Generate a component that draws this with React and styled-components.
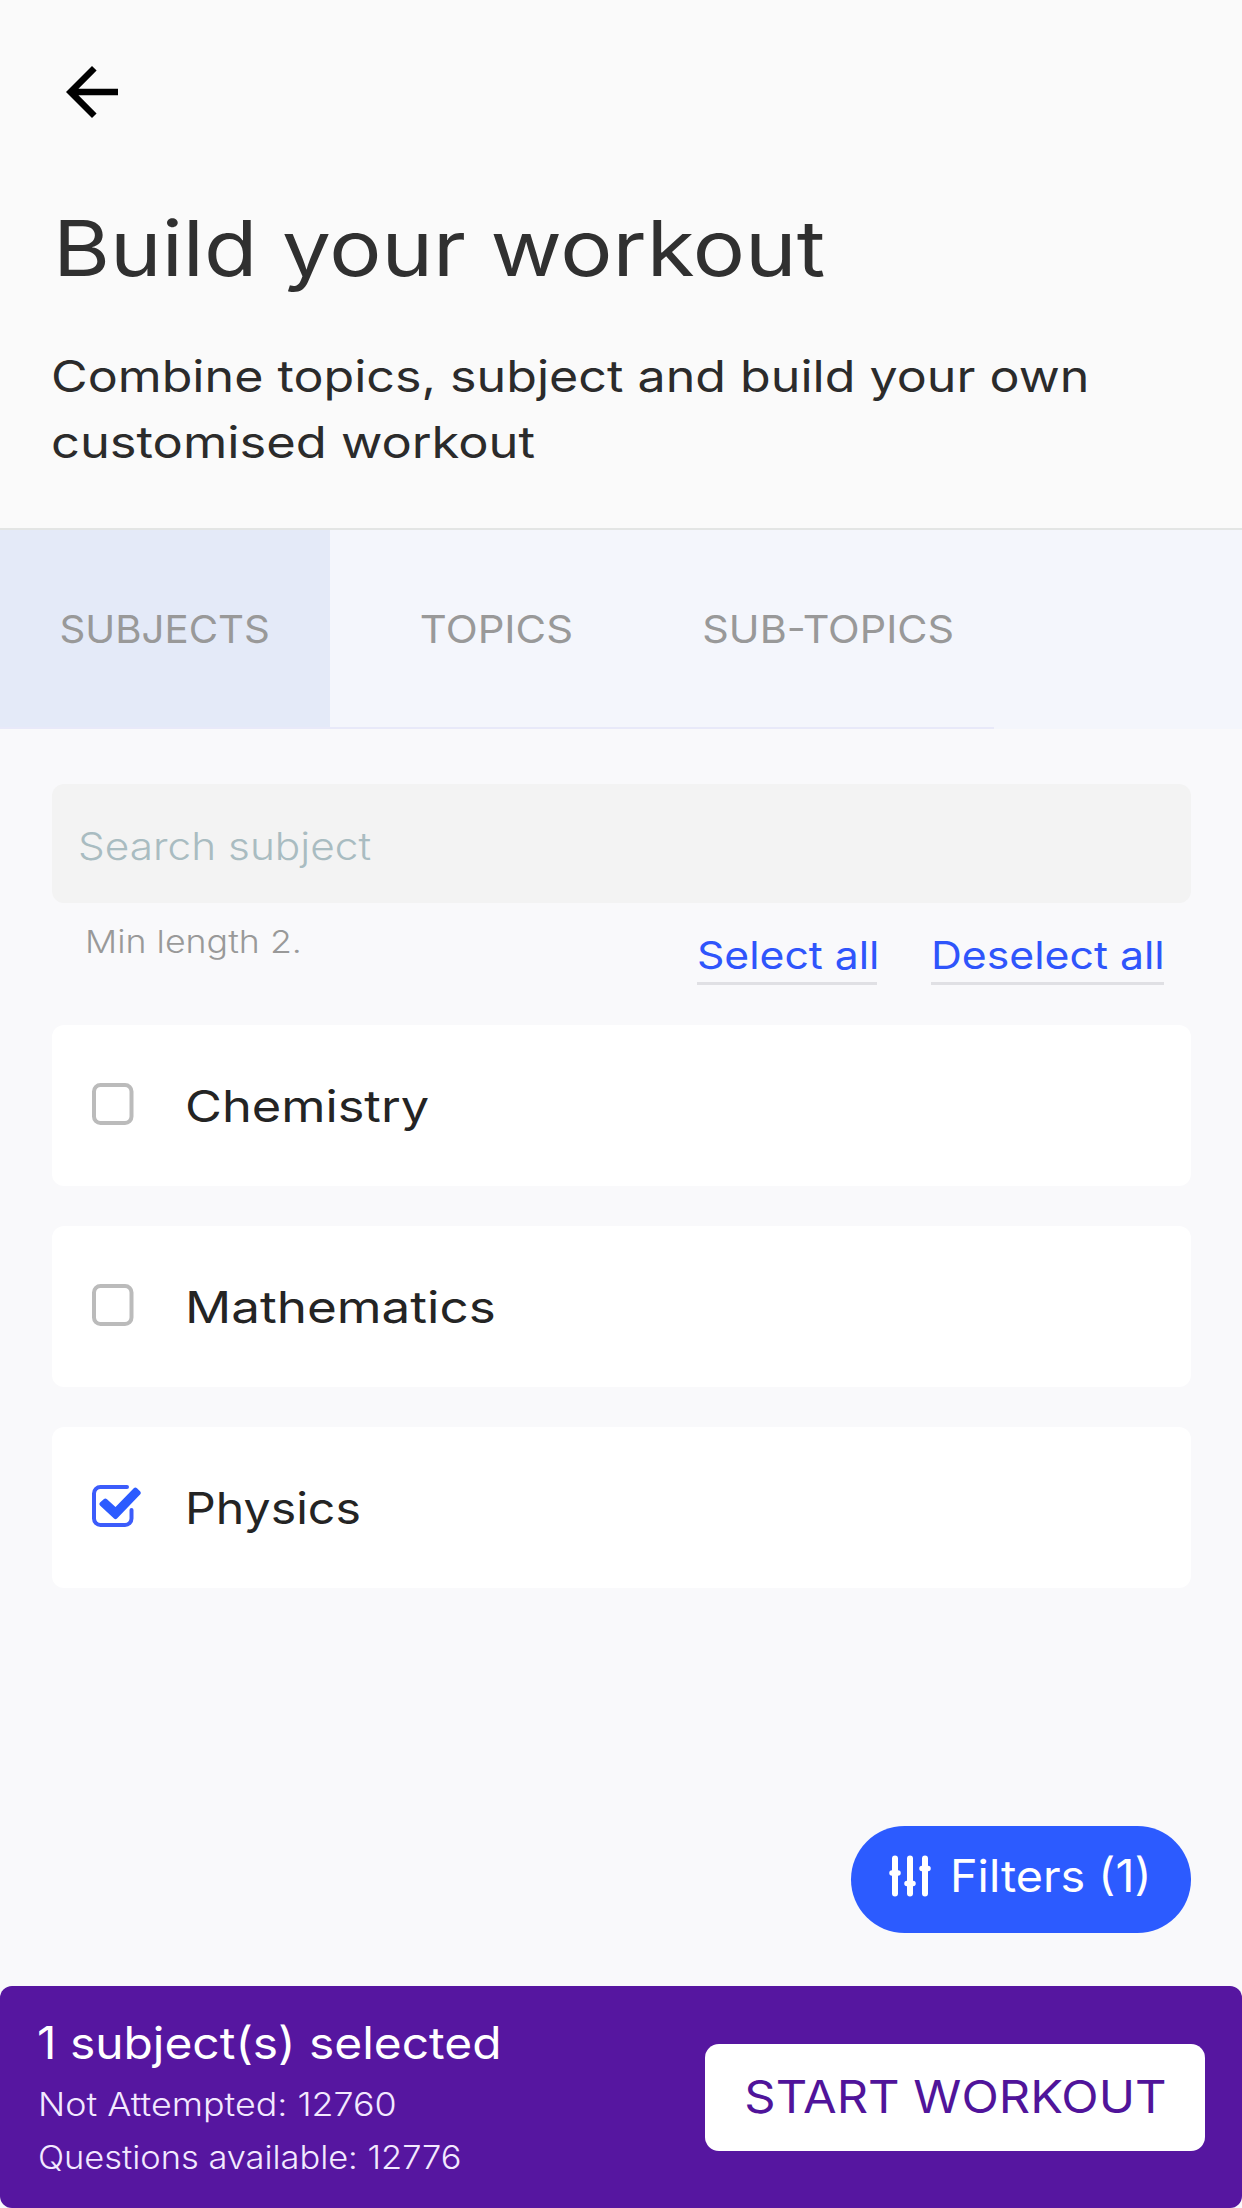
import React from "react";
import styled, { createGlobalStyle } from "styled-components";

const GlobalStyle = createGlobalStyle`
  * {
    box-sizing: border-box;
  }
  body {
    margin: 0;
    font-family: "Inter", "Open Sans", sans-serif;
    background: #f9f9fb;
  }
  button {
    font-family: inherit;
    border: none;
    padding: 0;
    background: none;
    cursor: pointer;
  }
`;
const Wide = styled.span`
  display: inline-block;
  white-space: nowrap;
  transform: scaleX(${(props) => props.$by});
  transform-origin: ${(props) => (props.$center ? "center" : "left")};
`;
const Page = styled.div`
  width: 100%;
  min-height: 2208px;
  display: flex;
  flex-direction: column;
  background: #f9f9fb;
`;
const Header = styled.header`
  height: 530px;
  padding: 53px 0 0 51px;
  background: #fafafa;
  border-bottom: 2px solid #e3e5e4;
`;
const BackButton = styled.button`
  display: block;
  height: 78px;
  margin-left: 2px;
  svg {
    display: block;
  }
`;
const Title = styled.h1`
  margin: 69px 0 0 2px;
  font-size: 77px;
  line-height: 96px;
  font-weight: 400;
  color: #303030;
`;
const Description = styled.p`
  display: flex;
  flex-direction: column;
  align-items: flex-start;
  margin: 47px 0 0;
  font-size: 44px;
  line-height: 66px;
  color: #2b2b2b;
`;
const Tabs = styled.nav`
  display: flex;
  height: 199px;
  background: #f4f6fc;
`;
const Tab = styled.button`
  width: ${(props) => props.$width}px;
  font-size: 38.5px;
  color: #999;
  background: ${(props) => (props.$active ? "#e4eaf8" : "transparent")};
  border-bottom: 2px solid #e8e9f9;
`;
const Main = styled.main`
  flex: 1;
  display: flex;
  flex-direction: column;
  padding: 55px 51px 53px 52px;
`;
const Search = styled.div`
  display: flex;
  align-items: center;
  height: 119px;
  padding: 5px 26px 0;
  border-radius: 12px;
  background: #f3f3f3;
  font-size: 38.5px;
  font-weight: 300;
  color: #a9bcc1;
`;
const SearchFooter = styled.div`
  display: flex;
  justify-content: space-between;
  align-items: flex-start;
  height: 122px;
  padding: 0 27px 0 32.5px;
`;
const Hint = styled.span`
  margin-top: 19px;
  font-size: 31.5px;
  line-height: 40px;
  font-weight: 300;
  color: #999;
`;
const Links = styled.div`
  display: flex;
  gap: 54px;
  margin-top: 29px;
`;
const Link = styled.button`
  width: ${(props) => props.$width}px;
  height: 53px;
  padding-bottom: 4px;
  text-align: left;
  font-size: 38.5px;
  line-height: 46px;
  color: #2f55fb;
  border-bottom: 3px solid #e0e0e4;
`;
const List = styled.div`
  display: flex;
  flex-direction: column;
  gap: 40px;
`;
const Card = styled.div`
  display: flex;
  align-items: center;
  height: 161px;
  padding-left: 40px;
  border-radius: 12px;
  background: #fff;
  font-size: 44px;
  color: #242424;
  cursor: pointer;
`;
const CheckIcon = styled.svg`
  width: 50px;
  height: 42px;
  margin-right: 43px;
  margin-bottom: 3px;
  fill: none;
`;
const FiltersButton = styled.button`
  display: flex;
  align-items: center;
  align-self: flex-end;
  width: 340px;
  height: 107px;
  margin-top: auto;
  padding: 0 0 7px 38px;
  border-radius: 54px;
  background: #2c5bff;
  color: #fff;
  font-size: 44.5px;
  svg {
    margin-right: 19px;
  }
`;
const Footer = styled.footer`
  display: flex;
  justify-content: space-between;
  height: 222px;
  padding: 25px 37px 0 37px;
  border-radius: 12px;
  background: #5616a0;
  color: #fff;
`;
const Selected = styled.div`
  font-size: 44.5px;
  line-height: 64px;
  margin-bottom: 3px;
`;
const Stat = styled.div`
  padding-left: 1px;
  font-size: 32px;
  line-height: 53px;
  font-weight: 300;
  color: #f3e9ff;
`;
const StartButton = styled.button`
  width: 500px;
  height: 107px;
  margin-top: 33px;
  padding-bottom: 2px;
  border-radius: 14px;
  background: #fff;
  color: #50149a;
  font-size: 44.5px;
`;

const tabs = [
  { name: "SUBJECTS", width: 330, by: 1.045 },
  { name: "TOPICS", width: 332, by: 1.087 },
  { name: "SUB-TOPICS", width: 332, by: 1.074 },
];
const subjects = [
  { name: "Chemistry", by: 1.148 },
  { name: "Mathematics", by: 1.163 },
  { name: "Physics", by: 1.096 },
];

function Checkbox({ checked }) {
  if (!checked)
    return (
      <CheckIcon viewBox="0 0 50 42">
        <rect x="2" y="2" width="37.5" height="38" rx="6.5" stroke="#bbb" strokeWidth="4" />
      </CheckIcon>
    );
  return (
    <CheckIcon viewBox="0 0 50 42">
      <path
        d="M35 2H8.5A6.5 6.5 0 0 0 2 8.5V33.5A6.5 6.5 0 0 0 8.5 40H33A6.5 6.5 0 0 0 39.5 33.5V25"
        stroke="#3c5cfb"
        strokeWidth="4"
        strokeLinecap="round"
      />
      <path
        d="M8 17.5L12 14Q13.500 13 15 14.300L23.500 22L42 3Q43.500 1.800 45 3.200L48.300 6.500Q49.500 8 48.300 9.300L25 33.500Q23.500 35 22 33.500L8 20.500Q6.500 19 8 17.500Z"
        fill="#2c5bff"
      />
    </CheckIcon>
  );
}

export default function App() {
  const [active, setActive] = React.useState("SUBJECTS");
  const [selected, setSelected] = React.useState("Physics");
  return (
    <Page>
      <GlobalStyle />
      <Header>
        <BackButton aria-label="Back">
          <svg width="78" height="78" viewBox="0 0 24 24">
            <path d="M20 11H7.83l5.59-5.59L12 4l-8 8 8 8 1.41-1.41L7.83 13H20v-2z" />
          </svg>
        </BackButton>
        <Title>
          <Wide $by={1.133}>Build your workout</Wide>
        </Title>
        <Description>
          <Wide $by={1.14}>Combine topics, subject and build your own</Wide>
          <Wide $by={1.15}>customised workout</Wide>
        </Description>
      </Header>
      <Tabs>
        {tabs.map((tab) => (
          <Tab
            key={tab.name}
            $width={tab.width}
            $active={active === tab.name}
            onClick={() => setActive(tab.name)}
          >
            <Wide $by={tab.by} $center>
              {tab.name}
            </Wide>
          </Tab>
        ))}
      </Tabs>
      <Main>
        <Search>
          <Wide $by={1.1}>Search subject</Wide>
        </Search>
        <SearchFooter>
          <Hint>
            <Wide $by={1.134}>Min length 2.</Wide>
          </Hint>
          <Links>
            <Link $width={180} onClick={() => setSelected("all")}>
              <Wide $by={1.108}>Select all</Wide>
            </Link>
            <Link $width={233} onClick={() => setSelected(null)}>
              <Wide $by={1.11}>Deselect all</Wide>
            </Link>
          </Links>
        </SearchFooter>
        <List>
          {subjects.map(({ name, by }) => (
            <Card key={name} onClick={() => setSelected(name)}>
              <Checkbox checked={selected === name || selected === "all"} />
              <Wide $by={by}>{name}</Wide>
            </Card>
          ))}
        </List>
        <FiltersButton>
          <svg width="42" height="42" viewBox="0 0 42 42" stroke="#fff" strokeLinecap="round">
            <path d="M6 3.5V38.500M21 3.500V38.500M36 3.500V38.500" strokeWidth="6" />
            <path d="M3 18H9M18 28.500H24M33 13.500H39" strokeWidth="5.500" />
          </svg>
          <Wide $by={1.05}>Filters (1)</Wide>
        </FiltersButton>
      </Main>
      <Footer>
        <div>
          <Selected>
            <Wide $by={1.076}>1 subject(s) selected</Wide>
          </Selected>
          <Stat>
            <Wide $by={1.119}>Not Attempted: 12760</Wide>
          </Stat>
          <Stat>
            <Wide $by={1.075}>Questions available: 12776</Wide>
          </Stat>
        </div>
        <StartButton>
          <Wide $by={1.097} $center>
            START WORKOUT
          </Wide>
        </StartButton>
      </Footer>
    </Page>
  );
}
